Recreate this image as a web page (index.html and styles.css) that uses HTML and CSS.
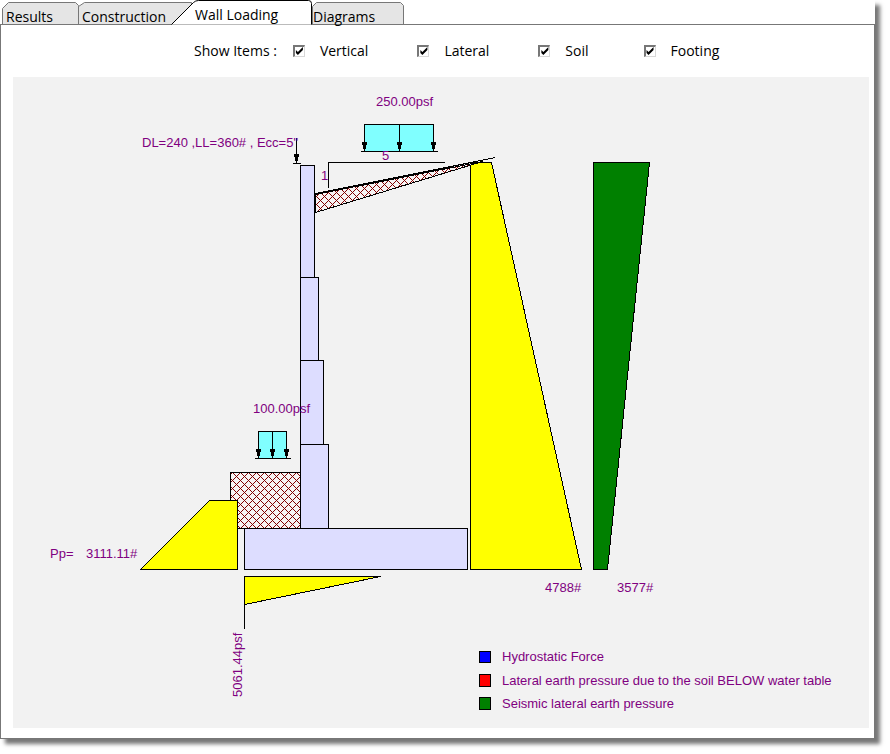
FILE: index.html
```html
<!DOCTYPE html>
<html lang="en">
<head>
<meta charset="utf-8">
<title>Wall Loading</title>
<link rel="stylesheet" href="styles.css">
</head>
<body>
<main class="window">
  <div class="tabs" role="tablist">
    <button class="tab tab-results" role="tab" type="button">
      <svg class="tab-shape" width="77" height="22" viewBox="0 0 77 22" aria-hidden="true"><path d="M.5 23V6.500L6.500 .5H73.500L76.500 3.500V23"/></svg>
      <span>Results</span>
    </button>
    <button class="tab tab-construction" role="tab" type="button">
      <svg class="tab-shape" width="114" height="22" viewBox="0 0 114 22" aria-hidden="true"><path d="M.5 23V4.500L6.500 .5H113.500V23"/></svg>
      <span>Construction</span>
    </button>
    <button class="tab tab-loading" role="tab" type="button" aria-selected="true">
      <svg class="tab-shape" width="141" height="25" viewBox="0 0 141 25" aria-hidden="true"><path d="M.5 24.500L22.500 2.500Q24.500 .5 27.500 .5H137.500Q140.500 .5 140.500 3.500V24.500"/></svg>
      <span>Wall Loading</span>
    </button>
    <button class="tab tab-diagrams" role="tab" type="button">
      <svg class="tab-shape" width="92" height="22" viewBox="0 0 92 22" aria-hidden="true"><path d="M.5 23V4.500L4.500 .5H88.500L91.500 3.500V23"/></svg>
      <span>Diagrams</span>
    </button>
  </div>
  <section class="panel">
    <div class="options">
      <span class="options-title">Show Items :</span>
      <label class="option"><input type="checkbox" checked>Vertical</label>
      <label class="option"><input type="checkbox" checked>Lateral</label>
      <label class="option option-soil"><input type="checkbox" checked>Soil</label>
      <label class="option"><input type="checkbox" checked>Footing</label>
    </div>
    <svg class="diagram" viewBox="13 77 856 651" role="img" aria-label="Wall loading diagram">
      <defs>
        <pattern id="hatch" width="8" height="8" patternUnits="userSpaceOnUse" patternTransform="translate(-.5 -.5)">
          <path class="hatch-ground" d="M0 0H8V8H0Z"/>
          <path class="hatch-line" d="M-1 -1L9 9M-1 10L10 -1M-1 2L2 -1"/>
        </pattern>
        <path id="arrow" d="M-2.500 -9.500H2.500V-6.500H1.500V-2.500H.5V.5H-.5V-2.500H-1.500V-6.500H-2.500Z"/>
      </defs>
      <g class="shapes" transform="translate(.5 .5)">
        <path class="soil" d="M230 472H300V528H230Z"/>
        <path class="pressure" d="M140 569L209 500H237V569Z"/>
        <path class="concrete" d="M300 165H314V277H300ZM300 277H318V360H300ZM300 360H323V444H300ZM300 444H328V528H300Z"/>
        <path class="concrete" d="M244 528H467V569H244Z"/>
        <path class="pressure" d="M470 162H491L581 569H470Z"/>
        <path class="seismic" d="M593 162H649L607 569H593Z"/>
        <path class="pressure" d="M244 576H380L244 604Z"/>
        <path class="line" d="M244 604V628"/>
        <path class="soil" d="M315 194L482 161L315 212Z"/>
        <path class="line" d="M315 193L495 157M315 194L495 157"/>
        <path class="line" d="M328 187V162H444"/>
        <path class="surcharge" d="M364 124H433V151H364Z"/>
        <path class="line" d="M399 124V151M360 151H437"/>
        <use class="arrow" href="#arrow" x="364" y="151"/><use class="arrow" href="#arrow" x="399" y="151"/><use class="arrow" href="#arrow" x="433" y="151"/>
        <path class="surcharge" d="M258 431H286V458H258Z"/>
        <path class="line" d="M272 431V458M254 458H290"/>
        <use class="arrow" href="#arrow" x="258" y="458"/><use class="arrow" href="#arrow" x="272" y="458"/><use class="arrow" href="#arrow" x="286" y="458"/>
        <path class="line" d="M296 137V163M292 163H300"/>
        <use class="arrow" href="#arrow" x="296" y="163"/>
        <path class="key-water" d="M479 651H490V662H479Z"/>
        <path class="key-below" d="M479 674H490V686H479Z"/>
        <path class="seismic" d="M479 697H490V709H479Z"/>
      </g>
      <g class="labels">
        <text x="376" y="106">250.00psf</text>
        <text x="142" y="147">DL=240 ,LL=360# , Ecc=5"</text>
        <text x="382" y="160">5</text>
        <text x="321" y="180">1</text>
        <text x="253" y="413">100.00psf</text>
        <text x="50" y="558">Pp=</text>
        <text x="86" y="558">3111.11#</text>
        <text x="545" y="592">4788#</text>
        <text x="617" y="592">3577#</text>
        <text transform="translate(242 697) rotate(-90)">5061.44psf</text>
        <text x="502" y="661">Hydrostatic Force</text>
        <text x="502" y="685">Lateral earth pressure due to the soil BELOW water table</text>
        <text x="502" y="708">Seismic lateral earth pressure</text>
      </g>
    </svg>
  </section>
</main>
</body>
</html>
```
FILE: styles.css
```css
* { box-sizing: border-box; }

body {
  margin: 0;
  background: #fff;
  color: #000;
  font: 14px/20px "Open Sans", "Noto Sans", sans-serif;
}

.window {
  margin: 0 15px 15px 0;
  background: #fff;
  box-shadow: 5px 5px 4px #777;
}

.tabs {
  display: flex;
  align-items: flex-end;
  height: 24px;
  padding-left: 2px;
}

.tab {
  position: relative;
  flex: none;
  height: 22px;
  margin: 0;
  padding: 0 0 0 4px;
  border: 0;
  background: none;
  color: inherit;
  font: inherit;
  line-height: 30px;
  text-align: left;
  white-space: nowrap;
}

.tab span { position: relative; display: block; height: 22px; }

.tab-shape {
  position: absolute;
  top: 0;
  left: 0;
  fill: #e5e5e5;
  stroke: #777;
}

.tab-results { width: 76px; }
.tab-construction { width: 114px; }
.tab-diagrams { width: 92px; padding-left: 1px; }

.tab-loading {
  z-index: 1;
  width: 141px;
  height: 25px;
  margin: 0 0 -1px -21px;
  padding-left: 24px;
}

.tab-loading span { height: 25px; }
.tab-loading .tab-shape { fill: #fff; stroke: #000; }

.panel {
  padding: 0 5px 10px 12px;
  border: 1px solid #777;
}

.options {
  display: flex;
  align-items: center;
  gap: 49px;
  height: 52px;
  padding-left: 181px;
}

.options-title { margin-right: -33px; }

.option {
  display: flex;
  align-items: center;
  gap: 15px;
}

.option-soil { padding-right: 6px; }

.option input {
  appearance: none;
  width: 12px;
  height: 12px;
  margin: 0;
  border: 1px solid #d8d8d8;
  border-top: 2px solid #777;
  border-left: 2px solid #777;
  background: #fff;
}

.option input:checked::before {
  content: "";
  display: block;
  width: 9px;
  height: 9px;
  background: #000;
  clip-path: polygon(1px 3px, 3px 5px, 8px 0, 8px 3px, 3px 8px, 1px 6px);
}

.diagram {
  display: block;
  width: 100%;
  height: auto;
  background: #f2f2f2;
}

.shapes { stroke: #000; shape-rendering: crispEdges; }
.hatch-ground { fill: #f7f4f4; stroke: none; }
.hatch-line { fill: none; stroke: #800000; shape-rendering: crispEdges; }
.soil { fill: url(#hatch); }
.pressure { fill: #ff0; }
.concrete { fill: #ddf; }
.seismic { fill: #008000; }
.surcharge { fill: #80ffff; }
.line { fill: none; }
.arrow { fill: #000; stroke: none; }
.key-water { fill: #00f; }
.key-below { fill: #f00; }

.labels {
  fill: #800080;
  font: 13px "Liberation Sans", Arial, sans-serif;
}
```
